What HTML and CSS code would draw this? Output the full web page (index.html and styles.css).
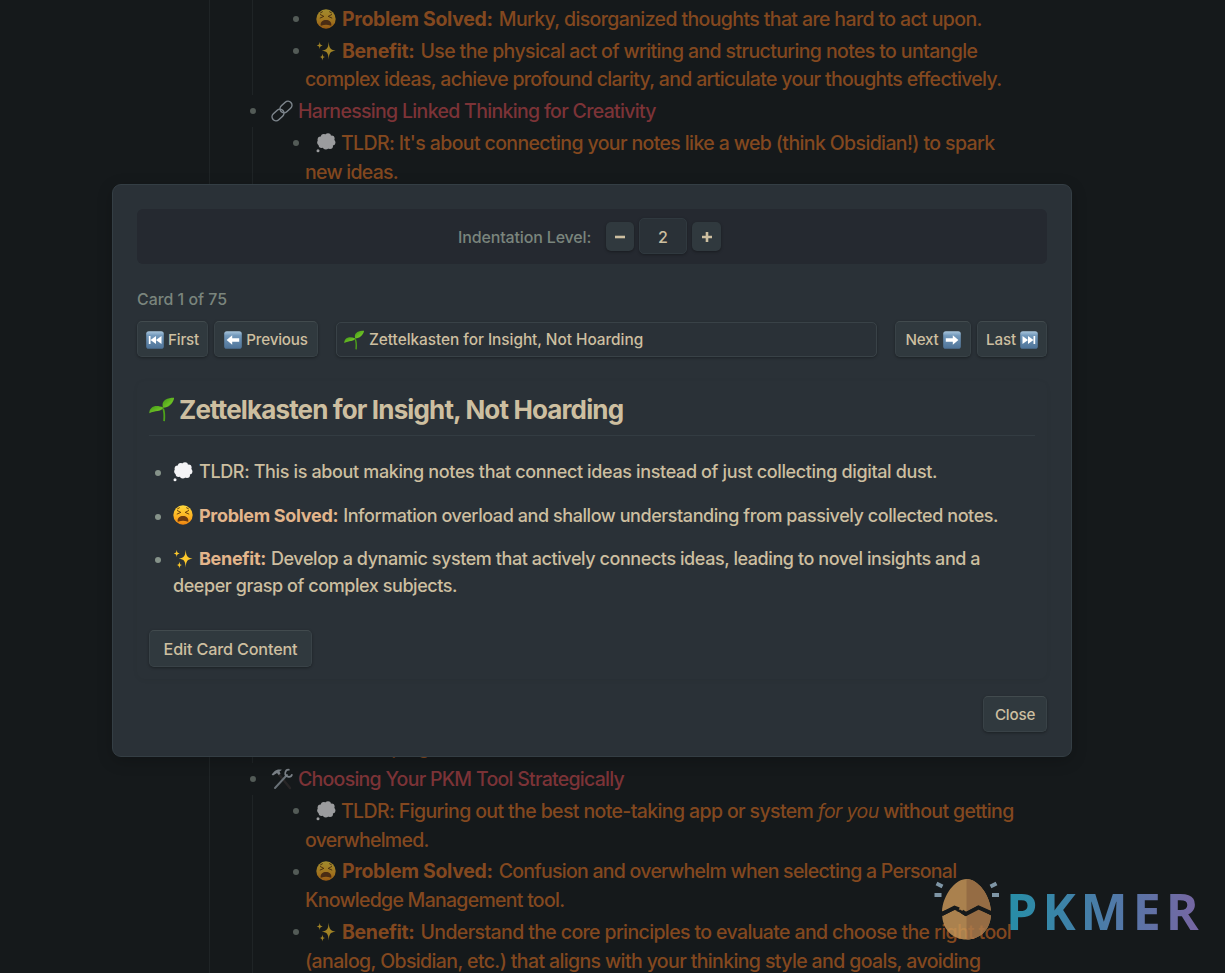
FILE: index.html
```
<!DOCTYPE html>
<html lang="en">
<head>
<meta charset="utf-8">
<title>Card viewer</title>
<link rel="stylesheet" href="styles.css">
</head>
<body>
<svg class="defs" width="0" height="0" aria-hidden="true">
  <defs>
    <linearGradient id="gFace" x1="0" y1="0" x2="0" y2="1"><stop offset="0" stop-color="#ffd93b"/><stop offset=".6" stop-color="#fdb021"/><stop offset="1" stop-color="#ee8410"/></linearGradient>
    <linearGradient id="gKey" x1="0" y1="0" x2="0" y2="1"><stop offset="0" stop-color="#a9c6dc"/><stop offset=".25" stop-color="#7399bb"/><stop offset="1" stop-color="#4d7297"/></linearGradient>
    <linearGradient id="gLeaf" x1="0" y1="0" x2="1" y2="1"><stop offset="0" stop-color="#3f9418"/><stop offset=".6" stop-color="#6cc024"/><stop offset="1" stop-color="#2f8010"/></linearGradient>
    <symbol id="face" viewBox="0 0 20 20">
      <circle cx="10" cy="10" r="9.7" fill="url(#gFace)"/>
      <path d="M4.400 5.600l3.400 1.800-3.600 1.600M15.600 5.600l-3.400 1.800 3.600 1.600M4.600 3.800l1.800-1M15.400 3.800l-1.800-1" fill="none" stroke="#5a3008" stroke-width=".9" stroke-linecap="round"/>
      <path d="M4.600 16c0-3.200 2.200-5 5.400-5s5.400 1.800 5.400 5c0 .8-.6.9-1.200.6-2.500-1.200-5.900-1.200-8.400 0-.6.3-1.200.2-1.200-.6z" fill="#6e3a10"/>
    </symbol>
    <symbol id="spark" viewBox="0 0 20 20">
      <path d="M12.700.8c.5 6 1.200 7.900 6.900 8.800-5.700.9-6.400 2.800-6.900 9-.5-6.200-1.200-8.100-6.900-9 5.700-.9 6.400-2.800 6.900-8.800z" fill="#fdc92c"/>
      <path d="M3.700.8c.3 2.600.7 3.300 3 3.700-2.300.4-2.700 1.100-3 3.700-.3-2.600-.7-3.300-3-3.700 2.300-.4 2.700-1.100 3-3.700zM6.400 12.400c.3 2.600.7 3.200 2.900 3.600-2.200.4-2.600 1-2.900 3.600-.3-2.600-.7-3.200-2.900-3.600 2.200-.4 2.600-1 2.900-3.600z" fill="#fdc92c"/>
    </symbol>
    <symbol id="cloud" viewBox="0 0 20 20">
      <g fill="#f4f4f6"><circle cx="4.600" cy="6.600" r="3"/><circle cx="7.800" cy="3.900" r="3"/><circle cx="12" cy="3.300" r="3"/><circle cx="15.600" cy="5.600" r="3"/><circle cx="16.400" cy="9.600" r="3"/><circle cx="14" cy="12.900" r="3"/><circle cx="9.800" cy="13.500" r="3"/><circle cx="5.600" cy="12" r="3"/><circle cx="4" cy="9.600" r="2.800"/><circle cx="10.300" cy="8.500" r="5.500"/><circle cx="2" cy="17.800" r="1.500"/></g>
    </symbol>
    <symbol id="link" viewBox="0 0 22 22">
      <g fill="none" stroke="#aab4bd" stroke-width="1.500"><rect x="-6.600" y="-4" width="13.200" height="8" rx="4" transform="translate(7 15) rotate(-42)"/><rect x="-6.600" y="-4" width="13.200" height="8" rx="4" transform="translate(15 7) rotate(-42)"/></g>
    </symbol>
    <symbol id="tools" viewBox="0 0 22 22">
      <path d="M8 6.500L19 20" stroke="#302b2b" stroke-width="2.400" stroke-linecap="round"/>
      <path d="M16 7L4 20" stroke="#8c969e" stroke-width="1.900" stroke-linecap="round"/>
      <path d="M.6 6.500L3.500 3.200C5.500 1.500 8 1 11 1.800L8.500 3.600l1 2.200-1.800 1.300-1.700-2L2 7.600z" fill="#a5adb5"/>
      <path d="M18.500 1.800a3.500 3.500 0 1 0 2.600 4.400" fill="none" stroke="#a5adb5" stroke-width="1.700"/>
    </symbol>
    <symbol id="leaf" viewBox="0 0 24 24">
      <path d="M13.600 11c1.400 3.500 1.300 7.500.9 12.200" fill="none" stroke="#4da31a" stroke-width="1.700"/>
      <path d="M.3 15.500C.5 9.500 6 6.800 13.800 10.200 11.500 14.500 6 12.500.3 15.500z" fill="url(#gLeaf)"/>
      <path d="M13.400 10.300C11.500 3.500 16.500.8 24.200.8 23 6 19.500 10 13.400 10.300z" fill="url(#gLeaf)"/>
    </symbol>
    <symbol id="keyFirst" viewBox="0 0 18 18"><rect x=".2" y=".2" width="17.600" height="17.600" rx="2.600" fill="url(#gKey)"/><path d="M2.800 5h1.700v8H2.800zM10 5v8L4.500 9zM15.500 5v8L10 9z" fill="#fff"/></symbol>
    <symbol id="keyLast" viewBox="0 0 18 18"><rect x=".2" y=".2" width="17.600" height="17.600" rx="2.600" fill="url(#gKey)"/><path d="M13.500 5h1.700v8h-1.700zM8 5v8l5.500-4zM2.500 5v8L8 9z" fill="#fff"/></symbol>
    <symbol id="keyLeft" viewBox="0 0 18 18"><rect x=".2" y=".2" width="17.600" height="17.600" rx="2.600" fill="url(#gKey)"/><path d="M2.600 9l5.600-4.800v3.100h7v3.400h-7v3.100z" fill="#fff"/></symbol>
    <symbol id="keyRight" viewBox="0 0 18 18"><rect x=".2" y=".2" width="17.600" height="17.600" rx="2.600" fill="url(#gKey)"/><path d="M15.400 9L9.800 4.200v3.100h-7v3.400h7v3.100z" fill="#fff"/></symbol>
  </defs>
</svg>

<main class="note">
  <ul class="outline outline-top">
    <li class="sub first"><div class="line lead"><svg><use href="#face"/></svg><b>Problem Solved:</b><span>Murky, disorganized thoughts that are hard to act upon.</span></div></li>
    <li class="sub"><div class="line lead"><svg><use href="#spark"/></svg><b>Benefit:</b><span>Use the physical act of writing and structuring notes to untangle</span></div><div class="line snug">complex ideas, achieve profound clarity, and articulate your thoughts effectively.</div></li>
    <li class="topic"><div class="line snug"><svg><use href="#link"/></svg>Harnessing Linked Thinking for Creativity</div></li>
    <li class="sub"><div class="line lead"><svg><use href="#cloud"/></svg>TLDR: It's about connecting your notes like a web (think Obsidian!) to spark</div><div class="line tight">new ideas.</div></li>
  </ul>
  <ul class="outline outline-bottom">
    <li class="sub"><div class="line tight">for developing.</div></li>
    <li class="topic"><div class="line tight"><svg><use href="#tools"/></svg>Choosing Your PKM Tool Strategically</div></li>
    <li class="sub"><div class="line lead"><svg><use href="#cloud"/></svg>TLDR: Figuring out the best note-taking app or system <i>for you</i> without getting</div><div class="line tight">overwhelmed.</div></li>
    <li class="sub"><div class="line lead"><svg><use href="#face"/></svg><b>Problem Solved:</b><span class="tight">Confusion and overwhelm when selecting a Personal</span></div><div class="line tight">Knowledge Management tool.</div></li>
    <li class="sub"><div class="line lead"><svg><use href="#spark"/></svg><b>Benefit:</b><span>Understand the core principles to evaluate and choose the right tool</span></div><div class="line">(analog, Obsidian, etc.) that aligns with your thinking style and goals, avoiding</div></li>
  </ul>
</main>

<section class="modal">
  <div class="indent-bar">
    <span class="indent-label">Indentation Level:</span>
    <button class="step"><svg viewBox="0 0 12 12"><path d="M1 6h10"/></svg></button>
    <span class="level">2</span>
    <button class="step plus"><svg viewBox="0 0 12 12"><path d="M1 6h10M6 1v10"/></svg></button>
  </div>
  <div class="counter">Card 1 of 75</div>
  <nav class="nav">
    <button class="btn first-btn"><svg><use href="#keyFirst"/></svg>First</button>
    <button class="btn prev-btn"><svg><use href="#keyLeft"/></svg>Previous</button>
    <div class="select"><svg><use href="#leaf"/></svg>Zettelkasten for Insight, Not Hoarding</div>
    <button class="btn next-btn">Next<svg><use href="#keyRight"/></svg></button>
    <button class="btn last-btn">Last<svg><use href="#keyLast"/></svg></button>
  </nav>
  <article class="card">
    <h2><svg><use href="#leaf"/></svg>Zettelkasten for Insight, Not Hoarding</h2>
    <ul class="points">
      <li><div class="row loose"><svg><use href="#cloud"/></svg>TLDR: This is about making notes that connect ideas instead of just collecting digital dust.</div></li>
      <li><div class="row"><svg><use href="#face"/></svg><b>Problem Solved:</b><span>Information overload and shallow understanding from passively collected notes.</span></div></li>
      <li><div class="row"><svg><use href="#spark"/></svg><b>Benefit:</b><span>Develop a dynamic system that actively connects ideas, leading to novel insights and a</span></div><div class="row">deeper grasp of complex subjects.</div></li>
    </ul>
    <button class="btn edit-btn">Edit Card Content</button>
  </article>
  <footer class="foot"><button class="btn close-btn">Close</button></footer>
</section>

<div class="brand">
  <svg class="egg" viewBox="0 0 68 64">
    <path d="M33.500 1C45 1 57 17 58 33l-13-5.500-13 7-5-3-5 1.500-3-3L9 33.500C10 17 22 1 33.500 1z" fill="#c79658"/>
    <path d="M33.500 1C45 1 57 17 58 33l-13-5.500-11.500 6z" fill="#ae7c4c"/>
    <path d="M9.200 38l12-6 5.500 2.500 5.500 3.500 13-7 12.700 6.500C57 52 47 61.500 33.500 61.500S10 52 9.200 38z" fill="#c79658"/>
    <path d="M33.500 37.200L45.200 31l12.700 6.500C57 52 47 61.500 33.500 61.500z" fill="#ae7c4c"/>
    <path d="M9 36l12.500-6.300 4.500 1.600M29 33.500l4 2.500 12.500-6.500L58 35" fill="none" stroke="#15191b" stroke-width="4"/>
    <path d="M3.500 5.500l6 3M1.500 17h7M63.500 5.500l-6 3M66 17h-7" stroke="#93adc0" stroke-width="4"/>
  </svg>
  <span class="brand-name">PKMER</span>
</div>
</body>
</html>
```
FILE: styles.css
```
* { box-sizing: border-box; }
body {
  margin: 0;
  height: 973px;
  overflow: hidden;
  background: #15191b;
  font-family: Inter, "Liberation Sans", sans-serif;
  font-weight: 450;
  position: relative;
}
.defs { position: absolute; }
ul { list-style: none; margin: 0; padding: 0; }
button { font: inherit; color: inherit; border: 0; padding: 0; }
svg { flex: none; display: block; }

/* Dimmed outline behind the dialog */
.note {
  margin-left: 209px;
  height: 973px;
  border-left: 1px solid #1f2426;
  padding-top: 3px;
  overflow: hidden;
  color: #83481f;
  font-size: 19.500px;
  letter-spacing: -0.620px;
}
.outline li { position: relative; padding: 1.550px 0; }
.outline-top .first { margin-top: -3px; padding-top: 4.550px; }
.outline-bottom { margin-top: 544px; }
.sub { margin-left: 42px; padding-left: 52px !important; border-left: 1px solid #1f2426; }
.topic { padding-left: 61px !important; color: #7c3337; }
.line { display: flex; align-items: center; height: 28.700px; white-space: pre; }
.lead { padding-left: 11px; }
.snug { letter-spacing: -0.680px; }
.tight { letter-spacing: -0.730px; }
.line svg { width: 20px; height: 20px; margin-right: 5px; opacity: .6; }
.topic .line svg { width: 22px; height: 22px; margin-right: 5px; opacity: .7; }
.line b { font-weight: 700; margin: 0 6px 0 1px; letter-spacing: -0.330px; }
.outline li::before {
  content: "";
  position: absolute;
  left: 40px;
  top: 13px;
  width: 6px;
  height: 6px;
  border-radius: 50%;
  background: #535b57;
}
.outline .first::before { top: 16px; }

/* Dialog */
.modal {
  position: absolute;
  left: 112px;
  top: 184px;
  width: 960px;
  height: 573px;
  padding: 24px;
  border: 1px solid #343e44;
  border-radius: 9px;
  background: #2a3137;
  color: #cdbfa0;
  display: flex;
  flex-direction: column;
  box-shadow: 0 4px 16px rgba(0, 0, 0, .2);
}
.indent-bar {
  height: 55px;
  flex: none;
  border-radius: 6px;
  background: #252930;
  display: flex;
  align-items: center;
  padding-left: 321px;
  font-size: 16px;
}
.indent-label { width: 148px; color: #7a857d; letter-spacing: -0.150px; white-space: nowrap; }
.step {
  width: 28px;
  height: 29px;
  border-radius: 5px;
  background: #30393e;
  box-shadow: 0 1px 3px rgba(0, 0, 0, .35);
  display: grid;
  place-items: center;
}
.step svg { width: 12px; height: 12px; fill: none; stroke: #cdbfa0; stroke-width: 2.600; }
.plus { width: 29px; }
.level {
  width: 48px;
  height: 36px;
  margin: 0 5px 1px;
  padding-top: 1px;
  border: 1px solid #30393f;
  border-radius: 5px;
  background: #2a3137;
  box-shadow: 0 1px 3px rgba(0, 0, 0, .3);
  display: grid;
  place-items: center;
}
.counter { margin-top: 26px; height: 20px; line-height: 20px; font-size: 15.900px; color: #7a857d; }
.nav { display: flex; margin-top: 11px; height: 36px; }
.btn {
  display: flex;
  align-items: center;
  justify-content: center;
  height: 36px;
  border: 1px solid #394247;
  border-top-color: #424b4e;
  border-radius: 5px;
  background: #30393e;
  box-shadow: 0 1px 3px rgba(0, 0, 0, .35);
  font-size: 15.200px;
  letter-spacing: -0.200px;
  white-space: nowrap;
  gap: 4px;
}
.btn svg { width: 18px; height: 18px; margin-top: 1px; }
.first-btn { width: 71px; }
.prev-btn { width: 104px; margin-left: 6px; }
.select {
  width: 541px;
  margin: 1px 18px 0;
  height: 35px;
  border: 1px solid #394247;
  border-radius: 5px;
  box-shadow: 0 1px 3px rgba(0, 0, 0, .3);
  display: flex;
  align-items: center;
  padding-left: 7px;
  gap: 5px;
  font-size: 15.400px;
  letter-spacing: -0.040px;
}
.select svg { width: 20px; height: 20px; }
.next-btn { width: 76px; }
.last-btn { width: 70px; margin-left: 6px; }
.card {
  margin-top: 24px;
  height: 298px;
  padding: 0 12px;
  border-radius: 8px;
  box-shadow: 0 1px 5px rgba(0, 0, 0, .05);
}
.card h2 {
  margin: 0;
  height: 55px;
  padding-top: 2px;
  border-bottom: 1px solid #333c42;
  display: flex;
  align-items: center;
  gap: 5px;
  font-size: 26px;
  font-weight: 700;
  letter-spacing: -0.860px;
  white-space: nowrap;
}
.card h2 svg { width: 25px; height: 25px; }
.points { padding: 22px 0 0 24px; font-size: 18px; letter-spacing: -0.430px; }
.points li { position: relative; margin-bottom: 16.500px; }
.points li::before {
  content: "";
  position: absolute;
  left: -18px;
  top: 12px;
  width: 6px;
  height: 6px;
  border-radius: 50%;
  background: #859289;
}
.row { display: flex; align-items: center; height: 27px; white-space: pre; }
.loose { letter-spacing: -0.360px; }
.row svg { width: 20px; height: 20px; margin-right: 6px; }
.row b { color: #e3b58b; margin-right: 5px; letter-spacing: -0.300px; }
.edit-btn { width: 163px; height: 37px; margin-top: 31px; font-size: 16.200px; letter-spacing: -0.150px; }
.foot { display: flex; justify-content: flex-end; margin-top: 17px; }
.close-btn { width: 64px; }

/* Watermark */
.brand {
  position: absolute;
  left: 933px;
  top: 878px;
  display: flex;
  align-items: flex-start;
  opacity: .84;
}
.egg { width: 68px; height: 64px; }
.brand-name {
  margin-left: 5px;
  padding-top: 1px;
  font: 700 50px/64px "Open Sans", "Noto Sans", sans-serif;
  letter-spacing: 5px;
  background: linear-gradient(90deg, #2aa5c2, #5590c4 48%, #8d74bd);
  -webkit-background-clip: text;
  background-clip: text;
  color: transparent;
}
```
